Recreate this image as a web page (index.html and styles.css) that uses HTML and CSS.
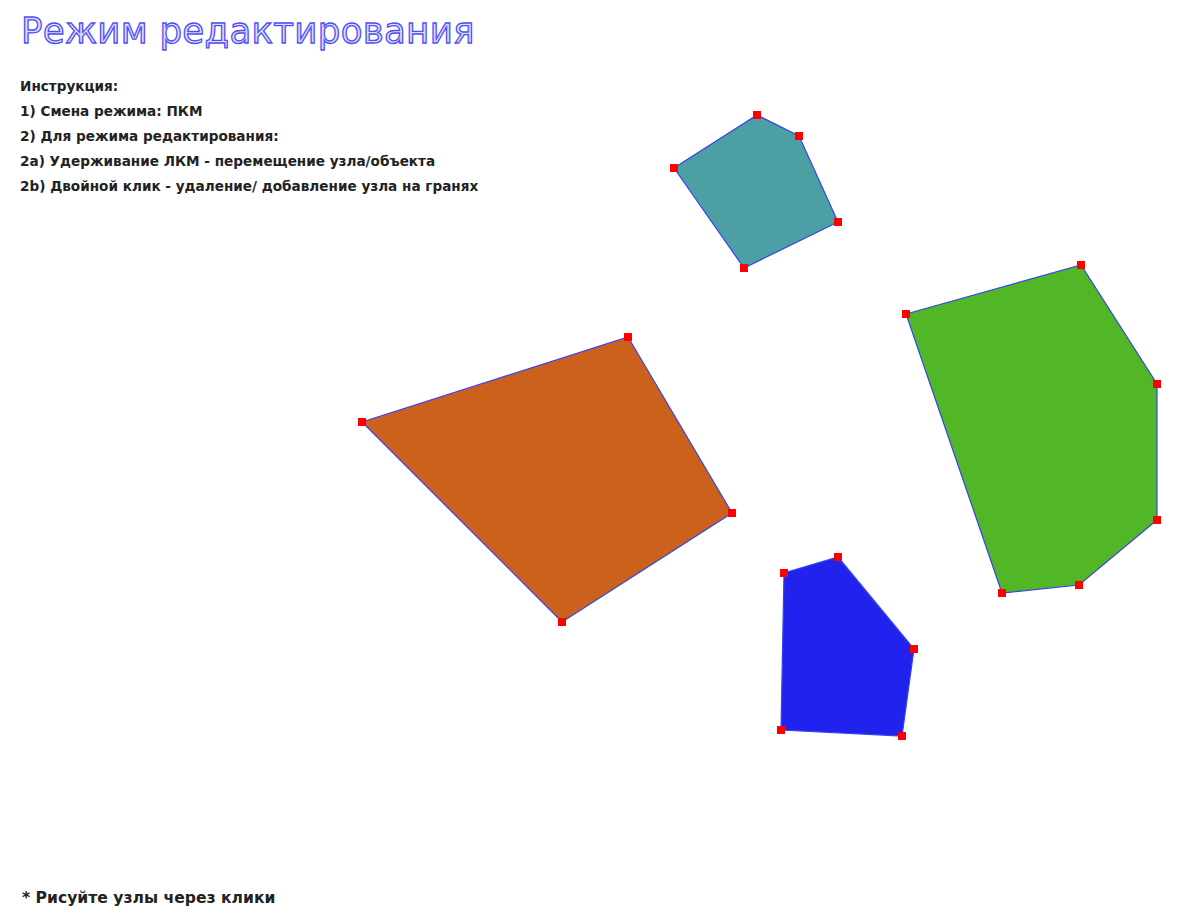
FILE: index.html
```html
<!DOCTYPE html>
<html lang="ru">
<head>
<meta charset="utf-8">
<title>Режим редактирования</title>
<link rel="stylesheet" href="styles.css">
</head>
<body>
<div class="page">
  <svg class="canvas" width="1183" height="918" viewBox="0 0 1183 918" xmlns="http://www.w3.org/2000/svg">
    <g class="shape">
      <polygon fill="#4ca0a4" points="757,115 799,136 838,222 744,268 674,168"/>
      <polygon fill="#52b726" points="906,314 1081,265 1157,384 1157,520 1079,585 1002,593"/>
      <polygon fill="#cc611e" points="628,337 732,513 562,622 362,422"/>
      <polygon fill="#2222ee" points="838,557 914,649 902,736 781,730 784,573"/>
    </g>
    <g class="nodes" fill="#ff0000">
      <rect x="753" y="111" width="8" height="8"/>
      <rect x="795" y="132" width="8" height="8"/>
      <rect x="834" y="218" width="8" height="8"/>
      <rect x="740" y="264" width="8" height="8"/>
      <rect x="670" y="164" width="8" height="8"/>

      <rect x="902" y="310" width="8" height="8"/>
      <rect x="1077" y="261" width="8" height="8"/>
      <rect x="1153" y="380" width="8" height="8"/>
      <rect x="1153" y="516" width="8" height="8"/>
      <rect x="1075" y="581" width="8" height="8"/>
      <rect x="998" y="589" width="8" height="8"/>

      <rect x="624" y="333" width="8" height="8"/>
      <rect x="728" y="509" width="8" height="8"/>
      <rect x="558" y="618" width="8" height="8"/>
      <rect x="358" y="418" width="8" height="8"/>

      <rect x="834" y="553" width="8" height="8"/>
      <rect x="910" y="645" width="8" height="8"/>
      <rect x="898" y="732" width="8" height="8"/>
      <rect x="777" y="726" width="8" height="8"/>
      <rect x="780" y="569" width="8" height="8"/>
    </g>
  </svg>
  <header class="head">
    <h1 class="title">Режим редактирования</h1>
    <ul class="help">
      <li>Инструкция:</li>
      <li>1) Смена режима: ПКМ</li>
      <li>2) Для режима редактирования:</li>
      <li>2a) Удерживание ЛКМ - перемещение узла/объекта</li>
      <li>2b) Двойной клик - удаление/ добавление узла на гранях</li>
    </ul>
  </header>
  <footer class="hint">* Рисуйте узлы через клики</footer>
</div>
</body>
</html>
```
FILE: styles.css
```css
html, body {
  margin: 0;
  padding: 0;
  background: #ffffff;
}
.page {
  position: relative;
  width: 1183px;
  height: 918px;
  display: flex;
  flex-direction: column;
  overflow: hidden;
  font-family: "DejaVu Sans", Verdana, sans-serif;
}
.canvas {
  position: absolute;
  left: 0;
  top: 0;
}
.shape polygon {
  stroke: #3344ee;
  stroke-width: 1.2;
}
.head {
  position: relative;
  padding: 8px 0 0 21px;
}
.title {
  margin: 0;
  font-size: 35.6px;
  font-weight: normal;
  line-height: 46px;
  color: #dcdcff;
  -webkit-text-stroke: 1.3px #5050f5;
  letter-spacing: 0.3px;
}
.help {
  list-style: none;
  margin: 20px 0 0 -1px;
  padding: 0;
  font-size: 13.6px;
  line-height: 25px;
  color: #222222;
  font-weight: bold;
}
.hint {
  position: relative;
  margin-top: auto;
  padding: 0 0 10px 22px;
  font-size: 15.6px;
  font-weight: bold;
  line-height: 20px;
  color: #222222;
}
```
